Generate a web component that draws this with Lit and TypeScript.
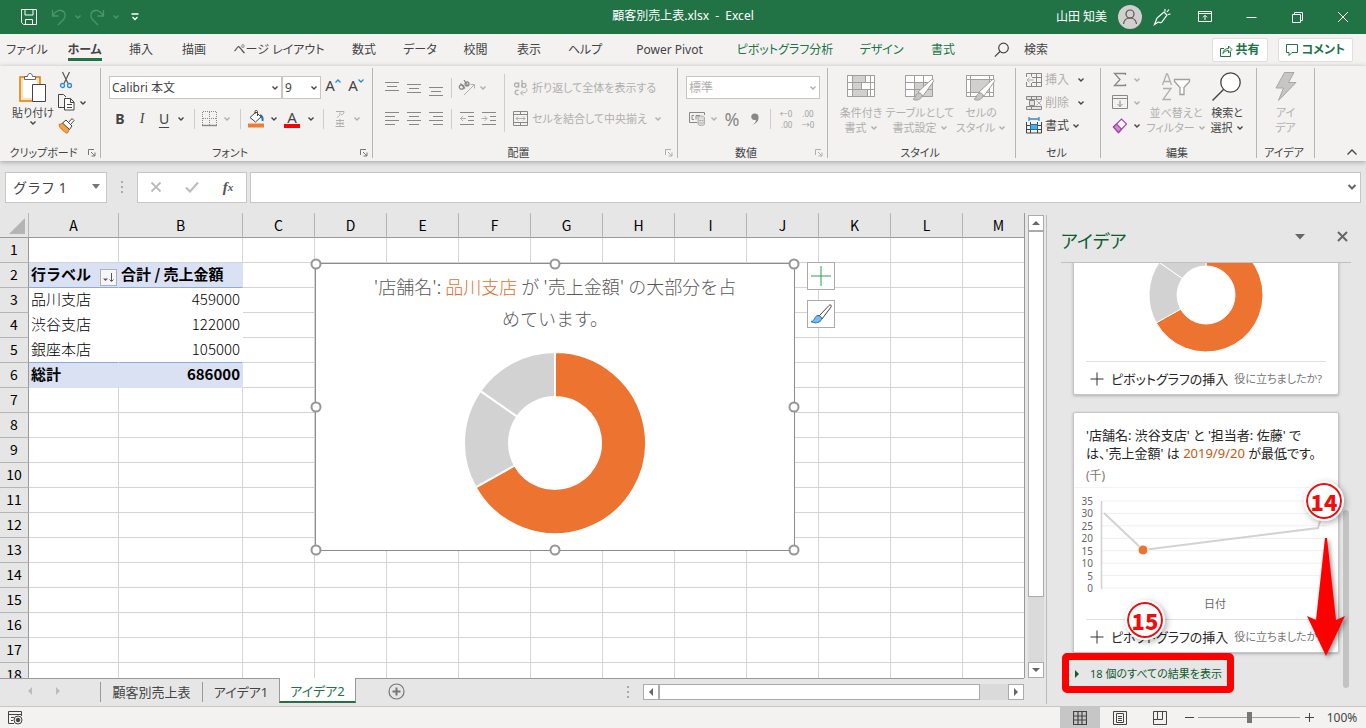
import { LitElement, html, svg, css, nothing } from "lit";
import { customElement } from "lit/decorators.js";
import { classMap } from "lit/directives/class-map.js";

const icon = (w: number, h: number, body: unknown) =>
  html`<svg width=${w} height=${h} viewBox="0 0 ${w} ${h}" fill="none" stroke="currentColor" aria-hidden="true">${body}</svg>`;

const chevron = () => icon(8, 6, svg`<path d="M1.5 1.5 4 4 6.5 1.5" stroke-width="1.4"/>`);

/* ---------- title bar ---------- */
const saveIcon = icon(16, 16, svg`<path d="M.5.5h15v15h-13l-2-2zM4 .5v5.500h8V.5M4.500 15.500v-5h7v5"/>`);
const undoIcon = icon(16, 18, svg`<path d="M1.500 2v6h6M1.500 8C4 4 7 2 10 2.500c5 1 5 6 2.500 9L7 17" stroke-width="1.300"/>`);
const redoIcon = icon(16, 18, svg`<path d="M14.500 2v6h-6M14.500 8C12 4 9 2 6 2.500c-5 1-5 6-2.500 9L9 17" stroke-width="1.300"/>`);
const customizeIcon = icon(8, 8, svg`<path d="M.5 1h7M1.500 4 4 6.500 6.500 4" stroke-width="1.300"/>`);
const avatar = icon(24, 24, svg`<circle cx="12" cy="12" r="12" fill="#d2d0ce" stroke="none"/><circle cx="12" cy="9" r="4" stroke="#555" stroke-width="1.200"/><path d="M5.500 19c.5-4 3-6 6.500-6s6 2 6.500 6" stroke="#555" stroke-width="1.200"/>`);
const penIcon = icon(18, 18, svg`<path d="M1.500 16.500 4 10 11 4l3 3-5.500 7.500C6.500 15 5.500 13.500 4.500 14.500zM12 3.500V1M14 4l2-2.500M15 6.500l2.500-.5" stroke-width="1.200"/>`);
const ribbonModeIcon = icon(14, 12, svg`<path d="M.5.5h13v10H.5zM.5 2.500h13M7 9V4.500M5 6.300l2-2 2 2"/>`);
const minIcon = icon(11, 11, svg`<path d="M.5 5.500h10"/>`);
const restoreIcon = icon(11, 11, svg`<path d="M.5 2.500h8v8h-8zM2.500 2.500v-2h8v8h-2"/>`);
const closeIcon = icon(12, 12, svg`<path d="M1 1l10 10M11 1 1 11"/>`);

/* ---------- ribbon ---------- */
const pasteIcon = icon(28, 32, svg`<rect x="1" y="5" width="20" height="24" fill="#fbe2b4" stroke="#e08214" stroke-width="1.600"/><rect x="4" y="8" width="14" height="18" fill="#fff" stroke="none"/><path d="M5.500 7.500v-3h3c0-4 5-4 5 0h3v3z" fill="#fff" stroke="#666"/><path d="M13.500 12.500h13v17h-13z" fill="#fff" stroke="#444"/>`);
const cutIcon = icon(16, 18, svg`<path d="M4.500 1 10 12.500M11.500 1 6 12.500" stroke="#555" stroke-width="1.200"/><circle cx="4.500" cy="14.500" r="2" stroke="#2e8bd0" stroke-width="1.300"/><circle cx="11.500" cy="14.500" r="2" stroke="#2e8bd0" stroke-width="1.300"/>`);
const copyIcon = icon(17, 17, svg`<path d="M6 13.500H.5V.5h5L8 3" stroke="#444"/><path d="M6.500 4.500h6l3.500 3.500v8H6.500zM12.500 4.500v4H16M9 10.500h5M9 13.500h5" fill="#fff" stroke="#444"/>`);
const painterIcon = icon(17, 17, svg`<path d="M1 7.500 5.500 6l6 6-2 4c-2 .5-3-1-3.500-2-1 0-2-1-2-2-1.500 0-2.500-2-3-4.500z" fill="#f0a348" stroke="#d9771b"/><path d="M4.500 6 8 3l6 6-2.500 3.500zM10.500 5.500 14 1.500l2 2-3.500 4" fill="#fff" stroke="#444"/>`);
const launcherIcon = icon(8, 8, svg`<path d="M.5 6V.5H6M3 3l4 4M7 3.500V7H3.500"/>`);
const borderIcon = icon(16, 16, svg`<path d="M.5 1v13M7.500 1v13M14.500 1v13M1 .5h14M1 7.500h14" stroke="#8a8886" stroke-dasharray="1 1"/><path d="M0 14.500h15" stroke="#8a8886" stroke-width="1.400"/>`);
const fillIcon = icon(18, 18, svg`<path d="M3 7.500 9 2l5 5-5.500 5z" fill="#fff" stroke="#444"/><path d="M8 4V1.500c0-1.500 2.500-1.500 2.500 0V6" stroke="#444"/><path d="M13 5c2 1 3 3 2.500 6" stroke="#2473b5" stroke-width="2"/><path d="M1 15.500h16" stroke="#ed7d31" stroke-width="4"/>`);
const furiganaIcon = icon(10, 18, svg`<path d="M1 1.500h8c0 2-1 3-3 3.500M5 2.500c0 3-1 4-3 5M1 10.500h8M2 13.500h6M2 12v3M8 12v3M.5 16.500h9M5 9v7"/>`);
const lines = (rows: number[][]) =>
  icon(16, 18, rows.map(([x1, x2, y]) => svg`<path d="M${x1} ${y}.5H${x2}" stroke="#8a8886"/>`));
const alignTop = lines([[1, 15, 3], [3, 13, 7], [1, 15, 11]]);
const alignMiddle = lines([[1, 15, 5], [3, 13, 9], [1, 15, 13]]);
const alignBottom = lines([[1, 15, 8], [3, 13, 12], [1, 15, 16]]);
const alignLeft = lines([[1, 15, 2], [1, 11, 6], [1, 15, 10], [1, 11, 14]]);
const alignCenter = lines([[1, 15, 2], [3, 13, 6], [1, 15, 10], [3, 13, 14]]);
const alignRight = lines([[1, 15, 2], [5, 15, 6], [1, 15, 10], [5, 15, 14]]);
const outdentIcon = icon(16, 18, svg`<path d="M1 2.500h14M9 6.500h6M9 10.500h6M1 14.500h14" stroke="#8a8886"/><path d="M7 8.500H1.500M4 6 1.500 8.500 4 11"/>`);
const indentIcon = icon(16, 18, svg`<path d="M1 2.500h14M9 6.500h6M9 10.500h6M1 14.500h14" stroke="#8a8886"/><path d="M.5 8.500H6M3.500 6 6 8.500 3.500 11"/>`);
const orientIcon = icon(18, 16, svg`<circle cx="3.500" cy="7" r="2.200" stroke="#8a8886" stroke-width="1.300"/><path d="M2.500 3.500 7 8.500M6 0l4 6" stroke="#8a8886" stroke-width="1.300"/><circle cx="9" cy="4" r="2" stroke="#8a8886" stroke-width="1.300"/><path d="M6 15 16 5M12.500 4.500H16.500V8.500"/>`);
const wrapIcon = icon(16, 18, svg`<circle cx="3.500" cy="6" r="2" stroke-width="1.300"/><path d="M5.700 3.500v5M9 1v7.500" stroke-width="1.300"/><circle cx="11" cy="6.300" r="2" stroke-width="1.300"/><path d="M5.500 11.500c-4-1.500-5 5 0 4" stroke-width="1.300"/><path d="M13.500 9.500c1.500 3-1 4.500-5.500 4.500M10 11.500 7.500 14l2.500 2.500"/>`);
const mergeIcon = icon(16, 16, svg`<path d="M.5.5h14v14H.5zM.5 3.500h14M.5 11.500h14M7.500.5v3M7.500 11.500v3" stroke="#8a8886"/><path d="M3 7.500h9M5 5.500l-2 2 2 2M10 5.500l2 2-2 2"/>`);
const currencyIcon = icon(17, 14, svg`<path d="M8 10.500H.5V.5h15V3M5 3.500H3v4h2M7 7.500v-4h2M11 3.500H9v2" stroke="#8a8886"/><path d="M9 5.500c0-2 6.500-2 6.500 0v6.500c0 2-6.500 2-6.500 0zM9 7.500c1 1.500 5.500 1.500 6.500 0M9 10c1 1.500 5.500 1.500 6.500 0" fill="#dcdad8"/>`);
const commaIcon = icon(10, 14, svg`<path d="M5 1.500a3.300 3.300 0 1 0 1 6.200C6 10 4.500 11.500 2.500 12.500 6.500 12 9 8.500 8.500 4.500 8.300 2.500 6.800 1.500 5 1.500z" fill="#8a8886" stroke="none"/>`);
const condIcon = icon(28, 32, svg`<path d="M.5 3.500h27v21H.5z" fill="#fff"/><path d="M6 4h12v6H6zM6 10h8v7H6zM6 17h14v7H6z" fill="#d2d0ce" stroke="none"/><path d="M.5 3.500h27v21H.5zM.5 10.500h27M.5 17.500h27M5.500 3.500v21M18.500 3.500v7M14.500 10.500v7M20.500 17.500v7M23.500 3.500v21" stroke="#a19f9d"/>`);
const brush = svg`<path d="M13 20 26 8c2-1.500 3.500 0 2 2L18 24z" fill="#fff" stroke="#a19f9d"/><path d="M8 27c3 0 2-6 6-6 3 0 4 3 2 5s-6 3-8 1z" fill="#c8c6c4" stroke="#a19f9d"/>`;
const tableIcon = icon(30, 32, svg`<path d="M.5 3.500h27v21H.5z" fill="#fff"/><path d="M10 11h18v13H10z" fill="#d2d0ce" stroke="none"/><path d="M.5 3.500h27v21H.5zM.5 10.500h27M.5 17.500h27M9.500 3.500v21M18.500 3.500v21" stroke="#a19f9d"/>${brush}`);
const cellStyleIcon = icon(30, 32, svg`<path d="M.5 3.500h27v21H.5z" fill="#fff"/><path d="M5 8h18v13H5z" fill="#d2d0ce" stroke="none"/><path d="M.5 3.500h27v21H.5zM.5 7.500h27M.5 20.500h27M4.500 3.500v21M23.500 3.500v21" stroke="#a19f9d"/>${brush}`);
const insertCells = icon(16, 14, svg`<g stroke="#8a8886"><path d="M4 .5h11.500v13H.5V9M.5 4V.5H4M6 4.500h9.500M6 9.500h9.500M5.500.5v3M5.500 10v3M10.500.5v13"/></g><path d="M8 7H1M3.500 4.500 1 7l2.500 2.500"/>`);
const deleteCells = icon(16, 14, svg`<g stroke="#8a8886"><path d="M.5.5h15v3H.5zM.5 10.500h15v3H.5zM5.500.5v3M10.500.5v3M5.500 10.500v3M3.500 4.500h5v5h-5z" fill="#e6e4e2"/></g><path d="M10.500 4.500l5 5M15.500 4.500l-5 5"/>`);
const formatCells = icon(16, 17, svg`<path d="M3 0v4M13 0v4M3 2h10" stroke="#2e8bd0" stroke-width="1.300"/><path d="M.5 5v11h15V5M.5 8.500h15M.5 12.500h15M4.500 5v11M11.500 5v11" stroke="#444"/><path d="M4.500 7.500h7v5h-7z" fill="#5aa7e0" stroke="#1f6fb5"/>`);
const sumIcon = icon(16, 16, svg`<path d="M13.500 3V1.500h-11L8 7.500l-5.500 6h11V12" stroke="#8a8886" stroke-width="1.300"/>`);
const fillDown = icon(16, 15, svg`<path d="M.5.500h15v13H.5zM.5 3.500h15M8 5.500v6M5.500 9 8 11.500 10.500 9" stroke="#8a8886"/>`);
const eraserIcon = icon(16, 16, svg`<path d="M1.500 9 9.500 1l5 5-8 8.500z" fill="#fff" stroke="#a343ab" stroke-width="1.200"/><path d="M1.500 9 4.500 6l5 5-3 3.500z" fill="#cf8fd4" stroke="#a343ab" stroke-width="1.200"/>`);
const sortIcon = icon(30, 32, svg`<path d="M1.500 13 5.500 2h1l4 11M3 9.500h6M2 16.500h8L2 27.500h8" stroke-width="1.300"/><path d="M13.500 7.500h15v2L23 15.500v7h-4v-7l-5.500-6z" fill="#fff" stroke="#a19f9d" stroke-width="1.300"/>`);
const findIcon = icon(30, 32, svg`<circle cx="18.500" cy="10.500" r="9.700" fill="#fff" stroke-width="1.300"/><path d="M11.500 17.500.500 28.500" stroke-width="1.500"/>`);
const boltIcon = icon(24, 32, svg`<path d="M10.500.5H20l-5.500 10H22L4.500 28.500l5-12.500H2z" fill="#c8c6c4" stroke="#a8a6a4"/>`);
const searchIcon = icon(16, 16, svg`<circle cx="9.500" cy="6" r="4.800" stroke-width="1.200"/><path d="M6 9.500.800 14.700" stroke-width="1.200"/>`);
const shareIcon = icon(13, 13, svg`<path d="M4 4.500H.5v8h10V8M3 9.500c0-3 2-5 5.500-5V2l3.500 3.500L8.500 9V6.500C6 6.500 4 7.500 3 9.500z"/>`);
const commentIcon = icon(13, 12, svg`<path d="M.5.500h11v8H6l-3 3v-3H.500z"/>`);
const growMark = icon(6, 4, svg`<path d="M.5 3.500 3 1l2.500 2.500" stroke="#2e8bd0" stroke-width="1.300"/>`);
const shrinkMark = icon(6, 4, svg`<path d="M.5.500 3 3 5.500.500" stroke="#2e8bd0" stroke-width="1.300"/>`);
const decIcon = (left: boolean) => html`<span class="dec"><span>${left ? "←0" : ".00"}</span><span>${left ? ".00" : "→0"}</span></span>`;

const tri = (dir: string) => {
  const d: Record<string, string> = {
    up: "M0 6 4 2l4 4z", down: "M0 2l4 4 4-4z", left: "M6 0 2 4l4 4z", right: "M2 0l4 4-4 4z",
  };
  return html`<svg width="8" height="8" viewBox="0 0 8 8" fill="currentColor" aria-hidden="true"><path d=${d[dir]}/></svg>`;
};

/* ---------- donut ---------- */
const shares = [
  { value: 459, color: "#ed7331" },
  { value: 122, color: "#d2d2d2" },
  { value: 105, color: "#d2d2d2" },
];
function donut(size: number, inner: number, gap: number) {
  const total = shares.reduce((s, d) => s + d.value, 0);
  const c = size / 2;
  const R = c - 1;
  const at = (r: number, t: number) => `${(c + r * Math.sin(t)).toFixed(2)} ${(c - r * Math.cos(t)).toFixed(2)}`;
  let a = 0;
  const slices = shares.map((d) => {
    const b = a + (d.value / total) * Math.PI * 2;
    const big = b - a > Math.PI ? 1 : 0;
    const p = `M${at(R, a)}A${R} ${R} 0 ${big} 1 ${at(R, b)}L${at(inner, b)}A${inner} ${inner} 0 ${big} 0 ${at(inner, a)}Z`;
    a = b;
    return svg`<path d=${p} fill=${d.color} stroke="#fff" stroke-width=${gap}/>`;
  });
  return html`<svg class="donut" width=${size} height=${size} viewBox="0 0 ${size} ${size}" role="img" aria-label="売上金額">${slices}</svg>`;
}

const tabs = ["ファイル", "ホーム", "挿入", "描画", "ページ レイアウト", "数式", "データ", "校閲", "表示", "ヘルプ", "Power Pivot", "ピボットグラフ分析", "デザイン", "書式"];
const columns = "ABCDEFGHIJKLM".split("");
const cells: Record<string, string> = {
  A2: "行ラベル", B2: "合計 / 売上金額",
  A3: "品川支店", B3: "459000",
  A4: "渋谷支店", B4: "122000",
  A5: "銀座本店", B5: "105000",
  A6: "総計", B6: "686000",
};

@customElement("app-root")
export class AppRoot extends LitElement {
  static styles = css`
    :host { display: flex; flex-direction: column; height: 100vh; overflow: hidden; background: #e6e6e6; color: #444; font: 12px/16px "Noto Sans", "Noto Sans CJK JP", sans-serif; font-feature-settings: "palt"; }
    * { box-sizing: border-box; }
    button, input, select { font: inherit; font-feature-settings: inherit; color: inherit; background: none; border: 0; padding: 0; margin: 0; border-radius: 0; }
    button { display: inline-flex; align-items: center; justify-content: center; white-space: nowrap; }
    svg { display: block; flex: none; }
    a { color: inherit; text-decoration: none; }
    .dim { color: #b1afad; }

    .titlebar { flex: none; display: grid; grid-template-columns: 1fr auto 1fr; align-items: center; height: 34px; background: #217346; color: #fff; }
    .quick { display: flex; align-items: center; padding-left: 18px; }
    .quick button { height: 24px; width: 22px; }
    .quick .arrow { width: 16px; }
    .quick .off { color: #4f9470; }
    .quick .spread { margin-left: 8px; }
    .title { white-space: pre; padding-bottom: 2px; }
    .account { display: flex; justify-content: flex-end; align-items: center; }
    .account button { height: 34px; width: 46px; }
    .user { padding-right: 11px; }
    .account .face { width: 24px; }
    .account .pen { width: 40px; }

    .menu { flex: none; display: flex; align-items: center; height: 32px; padding-right: 13px; background: #f3f2f1; }
    .tabs { display: grid; grid-template-columns: 54px 61px 52px 54px 116px 54px 58px 53px 54px 58px 111px 120px 73px 50px; height: 30px; }
    .tab { position: relative; height: 30px; }
    .tab.on { font-weight: 700; }
    .tab.on::after { content: ""; position: absolute; left: 14px; right: 13px; bottom: 4px; height: 3px; background: #217346; }
    .tab.ctx { color: #217346; }
    .find { display: flex; align-items: center; gap: 14px; margin-left: 26px; }
    .collab { display: flex; gap: 10px; margin-left: auto; }
    .collab button { height: 24px; padding: 0 7px; gap: 3px; background: #fff; border: 1px solid #e1dfdd; border-radius: 2px; color: #217346; font-weight: 700; }

    .ribbon { flex: none; position: relative; z-index: 1; display: flex; height: 95px; padding-top: 2px; background: #f3f2f1; box-shadow: 0 1px 5px #0000004d; font-size: 11px; }
    .group { flex: none; display: flex; flex-direction: column; height: 90px; border-right: 1px solid #b8b6b4; }
    .clip { width: 101px; } .font { width: 272px; } .align { width: 305px; } .num { width: 150px; }
    .style { width: 188px; } .cell { width: 85px; } .edit { width: 156px; } .idea { width: 58px; }
    .body { flex: 1; display: flex; }
    .idea .body { justify-content: center; }
    .label { flex: none; display: flex; align-items: center; height: 10px; padding-right: 3px; }
    .label span { flex: 1; text-align: center; white-space: nowrap; }
    .label button { width: 10px; height: 10px; color: #777; }
    .label .dim { color: #b1afad; }
    .stack { display: flex; flex-direction: column; font-size: 12px; }
    .stack > div { display: flex; align-items: center; height: 23px; }
    .rows { display: flex; flex-direction: column; gap: 8px; padding: 8px 0 0 8px; }
    .rows.flush { padding-left: 0; }
    .rows > div { display: flex; align-items: center; height: 23px; }
    .big { flex-direction: column; justify-content: flex-start; height: 74px; padding-top: 4px; line-height: 15px; }
    .big > svg { margin-bottom: 1px; }
    .big span { display: flex; align-items: center; gap: 3px; }
    .w8 { width: 8px; } .w10 { width: 10px; } .w12 { width: 12px; } .w14 { width: 14px; } .w16 { width: 16px; } .w18 { width: 18px; }
    .w22 { width: 22px; } .w24 { width: 24px; } .w40 { width: 40px; } .w50 { width: 50px; } .w54 { width: 54px; } .w62 { width: 62px; } .w68 { width: 68px; }
    .rows button, .stack button { height: 22px; }
    .bar { flex: none; width: 1px; height: 20px; margin: 0 4px; background: #cfcdcb; }
    .bar.wide { margin: 0 7px; }
    .bar.tall { height: 58px; margin: 6px 8px 0 4px; }
    .combo { display: grid; align-items: center; height: 23px; background: #fff; border: 1px solid #c8c6c4; font-size: 12px; }
    .combo > * { grid-area: 1 / 1; }
    .combo select, .combo input { appearance: none; width: 100%; height: 100%; padding-left: 2px; outline: 0; }
    .combo svg { justify-self: end; margin-right: 2px; pointer-events: none; }
    .face-name { width: 173px; } .face-size { width: 39px; } .format { width: 134px; }
    .b { font-weight: 700; font-size: 14px; } .i { font: italic 14px "Liberation Serif", serif; } .u { text-decoration: underline; text-underline-offset: 3px; font-size: 14px; }
    .fs { font-size: 15px; align-items: flex-start; }
    .fs svg { margin-top: 2px; }
    .color { flex-direction: column; line-height: 14px; font-size: 15px; }
    .color::after { content: ""; width: 16px; height: 4px; background: #f00; }
    .cmd { gap: 3px; justify-content: flex-start; }
    .pct { font-size: 18px; color: #8a8886; }
    .dec { display: flex; flex-direction: column; font-size: 8px; line-height: 11px; color: #a19f9d; }
    .dec span:last-child { align-self: flex-end; }
    .collapse { margin: auto 8px 4px auto; width: 12px; height: 10px; }

    .formula { flex: none; display: flex; align-items: center; height: 52px; padding: 0 5px 0 5px; }
    .box { height: 31px; background: #fff; border: 1px solid #c8c6c4; }
    .name { width: 102px; font-size: 14px; font-feature-settings: normal; }
    .name input { padding-left: 7px; }
    .name svg { margin-right: 5px; color: #777; }
    .dots { width: 30px; display: grid; justify-content: center; gap: 3px; }
    .dots i { width: 2px; height: 2px; background: #aaa; }
    .fx { display: flex; align-items: center; width: 110px; margin-right: 3px; }
    .fx button { flex: 1; height: 28px; color: #bbb; }
    .fx .fn { color: #555; font: italic 700 15px "Liberation Serif", serif; }
    .fx sub { font-size: 11px; }
    .entry { flex: 1; }
    .entry input { padding-left: 6px; }
    .entry svg { margin-right: 3px; color: #666; }

    .main { flex: 1; min-height: 0; display: flex; }
    .book { flex: 1; min-width: 0; display: flex; flex-direction: column; }
    .view { flex: 1; min-height: 0; display: flex; }
    .sheet { flex: 1; min-width: 0; position: relative; overflow: hidden; border-right: 1px solid #999; background: #fff; font-family: "Noto Sans CJK JP", sans-serif; color: #000; font-size: 14px; font-feature-settings: normal; }
    table { table-layout: fixed; width: 1035px; border-collapse: separate; border-spacing: 0; }
    .crow { width: 29px; } .ca { width: 90px; } .cb { width: 124px; } .cn { width: 72px; }
    th { height: 25px; padding: 0; font-weight: 400; background: #e6e6e6; border-right: 1px solid #b5b5b5; border-bottom: 1px solid #999; line-height: 20px; }
    tbody th { border-right-color: #999; border-bottom-color: #b5b5b5; padding-bottom: 2px; }
    .corner svg { margin: 2px 3px 0 auto; }
    td { height: 25px; padding: 0 2px 2px; border-right: 1px solid #d4d4d4; border-bottom: 1px solid #d4d4d4; font-size: 15px; font-weight: 300; line-height: 20px; white-space: nowrap; overflow: hidden; }
    .p { border-color: #fff; }
    .p.value { text-align: right; }
    .p.hd { background: #d9e1f2; border-color: #d9e1f2; border-bottom-color: #8ea9db; font-weight: 700; }
    .p.ft { background: #d9e1f2; border-color: #d9e1f2; font-weight: 700; }
    .p.pre { border-bottom-color: #8ea9db; }
    .lab { display: flex; justify-content: space-between; align-items: center; height: 22px; }
    .sort { width: 17px; height: 17px; margin: 7px -1px 0 0; border: 1px solid #b0b0b0; background: #f5f6f8; color: #555; }

    .chart { position: absolute; left: 315px; top: 50px; width: 480px; height: 288px; margin: 0; background: #fff; border: 1px solid #8c8c8c; display: flex; flex-direction: column; align-items: center; padding-top: 6px; }
    .chart h2 { margin: 0; width: 380px; font-weight: 300; font-size: 18px; line-height: 32px; color: #595959; text-align: center; }
    .chart .donut { margin-top: 17px; }
    .hl { color: #e0702e; }
    .card .hl { color: #c55a11; }
    .knob { position: absolute; width: 11px; height: 11px; border: 2px solid #969696; border-radius: 50%; background: #fff; transform: translate(-50%, -50%); }
    .t { top: 0; } .m { top: 50%; } .bt { top: 100%; } .l { left: 0; } .c { left: 50%; } .r { left: 100%; }
    .side { position: absolute; left: 807px; top: 49px; display: grid; gap: 10px; }
    .side button { width: 28px; height: 28px; background: #fff; border: 1px solid #ababab; }

    .vscroll { flex: none; width: 16px; margin: 2px 2px 0 3px; display: flex; flex-direction: column; background: #dadada; }
    .hscroll { width: 381px; height: 16px; display: flex; background: #dadada; }
    .knobbtn { flex: none; width: 16px; height: 16px; background: #fff; border: 1px solid #ababab; color: #666; }
    .vthumb { flex: 0 0 79%; background: #fff; border: 1px solid #ababab; }
    .vspace, .hspace { flex: 1; }
    .hthumb { flex: 0 0 321px; background: #fff; border: 1px solid #ababab; }

    .sheettabs { flex: none; display: flex; align-items: flex-start; height: 28px; font-size: 13px; }
    .strip { flex: 1; display: flex; border-top: 1px solid #999; height: 27px; }
    .nav { display: flex; width: 100px; padding-left: 16px; color: #bbb; }
    .nav button { width: 28px; height: 24px; }
    .st { height: 20px; margin-top: 3px; border-left: 1px solid #999; }
    .st.s1 { width: 102px; } .st.s2 { width: 77px; }
    .st.act { width: 77px; height: 25px; margin-top: -1px; padding-top: 2px; background: #fff; border: solid #999; border-width: 0 1px; border-bottom: 2px solid #217346; color: #217346; }
    .add { margin: 4px 0 0 32px; height: 17px; color: #777; }
    .hs { margin-left: auto; display: flex; align-items: center; padding-bottom: 1px; }

    .pane { flex: none; position: relative; width: 320px; display: flex; flex-direction: column; border-left: 1px solid #bbb; margin: 2px 0; padding-left: 14px; }
    .phead { flex: none; display: flex; align-items: center; height: 48px; margin-right: 15px; border-bottom: 1px solid #c0c0c0; color: #666; }
    .phead h1 { flex: 1; margin: 0; padding-top: 4px; font-weight: 400; font-size: 18px; line-height: 24px; color: #0e5c2f; }
    .phead button { width: 24px; height: 24px; margin-bottom: 4px; }
    .phead .close { margin: 0 -3px 4px 18px; }
    .cards { flex: 1; min-height: 0; overflow: hidden; display: flex; flex-direction: column; justify-content: flex-end; padding: 0 28px 22px 12px; }
    .card { flex: none; width: 266px; background: #fff; border: 1px solid #c6c6c6; border-radius: 2px; box-shadow: 0 1px 3px #00000040; margin-bottom: 17px; display: flex; flex-direction: column; color: #262626; }
    .card.last { margin-bottom: 13px; }
    .card .donut { align-self: center; margin-bottom: 8px; }
    .card p { margin: 0; padding: 13px 12px 0; font-size: 13px; line-height: 18px; white-space: nowrap; }
    .unit { padding: 6px 12px 3px; color: #777; line-height: 16px; }
    .axis { font-size: 10px; fill: #666; stroke: none; }
    .axis.name-axis { font-size: 11px; }
    .cfoot { display: flex; justify-content: space-between; align-items: center; height: 33px; margin: 0 12px; border-top: 1px solid #e1dfdd; padding: 1px 4px 0 4px; white-space: nowrap; }
    .cfoot button { gap: 7px; font-size: 13px; }
    .cfoot a { color: #777; font-size: 11px; }
    .more { align-self: flex-start; gap: 9px; height: 24px; font-size: 11px; color: #0e5c2f; }
    .pscroll { position: absolute; right: 17px; top: 295px; width: 6px; height: 178px; border-radius: 3px; background: #c3c3c3; }
    .frame { position: absolute; left: 15px; top: 438px; width: 172px; height: 40px; border: 7px solid #f00; border-radius: 5px; }
    .mark { position: absolute; width: 36px; height: 36px; border: 2px solid #f20d0d; border-radius: 50%; outline: 2px solid #fff; background: #fff; color: #f20d0d; display: grid; place-items: center; font-weight: 900; font-size: 22px; font-family: "Noto Sans CJK JP", sans-serif; box-shadow: 2px 2px 6px 2px #0000004d; }
    .n14 { left: 259px; top: 268px; } .n15 { left: 80px; top: 387px; }
    .down { position: absolute; left: 260px; top: 322px; filter: drop-shadow(2px 2px 2px #0006); }

    .status { flex: none; display: flex; align-items: center; height: 22px; padding: 0 7px; background: #f3f2f1; border-top: 1px solid #c6c6c6; }
    .views { display: flex; margin-left: auto; height: 21px; }
    .views button { width: 40px; height: 21px; }
    .views .sel { background: #c6c6c6; }
    .status .step { width: 18px; height: 20px; }
    .zoom { appearance: none; width: 102px; height: 12px; background: linear-gradient(#a0a0a0, #a0a0a0) center / 100% 1px no-repeat; }
    .zoom::-webkit-slider-thumb { appearance: none; width: 5px; height: 11px; background: #777; }
    .pc { padding-left: 7px; width: 41px; }
  `;

  private label(text: string, launcher = "") {
    return html`<div class="label"><span>${text}</span>${launcher
      ? html`<button class=${launcher === "off" ? "dim" : ""} aria-label="${text}の設定">${launcherIcon}</button>`
      : nothing}</div>`;
  }

  private tool(name: string, cls: string, content: unknown) {
    return html`<button class=${cls} aria-label=${name}>${content}</button>`;
  }

  private ribbon() {
    const t = this.tool;
    return html`<div class="ribbon">
      <section class="group clip"><div class="body"><i class="w8"></i>
        <button class="big w50">${pasteIcon}<span>貼り付け</span><span>${chevron()}</span></button>
        <div class="stack">
          <div>${t("切り取り", "w16", cutIcon)}</div>
          <div>${t("コピー", "w16", copyIcon)}${t("コピーのオプション", "w18", chevron())}</div>
          <div>${t("書式のコピー", "w16", painterIcon)}</div>
        </div></div>${this.label("クリップボード", "on")}</section>

      <section class="group font"><div class="body"><div class="rows">
        <div>
          <div class="combo face-name"><select aria-label="フォント名"><option>Calibri 本文</option></select>${chevron()}</div>
          <div class="combo face-size"><select aria-label="フォント サイズ"><option>9</option></select>${chevron()}</div>
          <button class="fs w24" aria-label="拡大">A${growMark}</button><button class="fs w22" aria-label="縮小">A${shrinkMark}</button>
        </div>
        <div>
          <button class="b w22">B</button><button class="i w22">I</button><button class="u w22">U</button>${t("下線の種類", "w12", chevron())}
          <i class="bar wide"></i>${t("罫線", "w16 dim", borderIcon)}${t("罫線の種類", "w18 dim", chevron())}
          <i class="bar"></i>${t("塗りつぶし", "w22", fillIcon)}${t("塗りつぶしの色", "w14", chevron())}
          <button class="color w22">A</button>${t("フォントの色", "w16", chevron())}
          <i class="bar"></i>${t("ふりがな", "w24 dim", furiganaIcon)}${t("ふりがなの設定", "w10 dim", chevron())}
        </div></div></div>${this.label("フォント", "on")}</section>

      <section class="group align"><div class="body dim"><div class="rows">
        <div>${t("上揃え", "w22", alignTop)}${t("上下中央", "w22", alignMiddle)}${t("下揃え", "w22", alignBottom)}
          <i class="bar"></i>${t("方向", "w22", orientIcon)}${t("方向の設定", "w10", chevron())}</div>
        <div>${t("左揃え", "w22", alignLeft)}${t("中央揃え", "w22", alignCenter)}${t("右揃え", "w22", alignRight)}
          <i class="bar"></i>${t("インデントを減らす", "w22", outdentIcon)}${t("インデントを増やす", "w22", indentIcon)}</div>
        </div><i class="bar tall"></i>
        <div class="rows flush">
        <div><button class="cmd">${wrapIcon}折り返して全体を表示する</button></div>
        <div><button class="cmd">${mergeIcon}セルを結合して中央揃え</button>${t("結合の設定", "w22", chevron())}</div>
        </div></div>${this.label("配置", "off")}</section>

      <section class="group num"><div class="body dim"><div class="rows">
        <div><div class="combo format"><select aria-label="表示形式"><option>標準</option></select>${chevron()}</div></div>
        <div>${t("通貨", "w22", currencyIcon)}${t("通貨の設定", "w12", chevron())}<button class="pct w24">%</button>${t("桁区切り", "w22", commaIcon)}
          <i class="bar"></i><button class="w22">${decIcon(true)}</button><button class="w22">${decIcon(false)}</button></div>
        </div></div>${this.label("数値", "off")}</section>

      <section class="group style"><div class="body dim"><i class="w8"></i>
        <button class="big w50">${condIcon}<span>条件付き</span><span>書式 ${chevron()}</span></button>
        <button class="big w68">${tableIcon}<span>テーブルとして</span><span>書式設定 ${chevron()}</span></button>
        <button class="big w54">${cellStyleIcon}<span>セルの</span><span>スタイル ${chevron()}</span></button>
        </div>${this.label("スタイル")}</section>

      <section class="group cell"><div class="body"><i class="w10"></i><div class="stack">
        <div><button class="cmd dim">${insertCells}挿入</button>${t("挿入の種類", "w24", chevron())}</div>
        <div><button class="cmd dim">${deleteCells}削除</button>${t("削除の種類", "w24", chevron())}</div>
        <div><button class="cmd">${formatCells}書式 ${chevron()}</button></div>
        </div></div>${this.label("セル")}</section>

      <section class="group edit"><div class="body"><i class="w10"></i><div class="stack">
        <div>${t("合計", "w18 dim", sumIcon)}${t("合計の種類", "w16 dim", chevron())}</div>
        <div>${t("フィル", "w18 dim", fillDown)}${t("フィルの種類", "w16 dim", chevron())}</div>
        <div>${t("クリア", "w18", eraserIcon)}${t("クリアの種類", "w16", chevron())}</div></div>
        <button class="big w62 dim">${sortIcon}<span>並べ替えと</span><span>フィルター ${chevron()}</span></button>
        <button class="big w40">${findIcon}<span>検索と</span><span>選択 ${chevron()}</span></button>
        </div>${this.label("編集")}</section>

      <section class="group idea"><div class="body dim">
        <button class="big">${boltIcon}<span>アイ</span><span>デア</span></button>
        </div>${this.label("アイデア")}</section>
      <button class="collapse" aria-label="リボンを折りたたむ">${icon(10, 6, svg`<path d="M.5 5.500 5 1l4.500 4.500" stroke-width="1.300"/>`)}</button>
    </div>`;
  }

  private cell(col: string, row: number) {
    const pivot = (col === "A" || col === "B") && row >= 2 && row <= 6;
    const cls = classMap({
      p: pivot,
      hd: pivot && row === 2,
      ft: pivot && row === 6,
      pre: pivot && row === 5,
      value: pivot && col === "B" && row > 2,
    });
    const text = cells[col + row] ?? "";
    return html`<td class=${cls}>${col + row === "A2"
      ? html`<div class="lab">${text}<button class="sort" aria-label="並べ替え">${icon(13, 11, svg`<path d="M1 6.500h5L3.500 9z" fill="currentColor" stroke="none"/><path d="M9.500 1v8M7.500 7.500l2 2 2-2"/>`)}</button></div>`
      : text}</td>`;
  }

  private sheet() {
    return html`<div class="sheet">
      <table>
        <colgroup><col class="crow"><col class="ca"><col class="cb">${columns.slice(2).map(() => html`<col class="cn">`)}</colgroup>
        <thead><tr><th class="corner"><svg width="16" height="16" viewBox="0 0 16 16" aria-hidden="true"><path d="M16 0v16H0z" fill="#b4b4b4"/></svg></th>
          ${columns.map((c) => html`<th scope="col">${c}</th>`)}</tr></thead>
        <tbody>${Array.from({ length: 18 }, (_, i) => i + 1).map((r) => html`<tr><th scope="row">${r}</th>${columns.map((c) => this.cell(c, r))}</tr>`)}</tbody>
      </table>
      <figure class="chart">
        <h2>'店舗名': <span class="hl">品川支店</span> が '売上金額' の大部分を占めています。</h2>
        ${donut(184, 46, 2)}
        ${["t l", "t c", "t r", "m l", "m r", "bt l", "bt c", "bt r"].map((p) => html`<i class="knob ${p}"></i>`)}
      </figure>
      <div class="side">
        <button aria-label="グラフ要素">${icon(22, 22, svg`<path d="M11 1v20M1 11h20" stroke="#2f9e51"/>`)}</button>
        <button aria-label="グラフ スタイル">${icon(24, 24, svg`<path d="M10 14 20 3.500c1.500-1.500 3 0 2 1.500L13 17" stroke="#444" fill="#fff"/><path d="M2 19.500c4 0 3-5.500 7-6 3 0 4.500 3 3 5-2 2.500-7 3-10 1z" fill="#7db9ec" stroke="#1a6dba"/>`)}</button>
      </div>
    </div>`;
  }

  private insertFooter() {
    return html`<div class="cfoot"><button>${icon(14, 14, svg`<path d="M7 .5v13M.5 7h13" stroke="#333"/>`)}ピボットグラフの挿入</button><a href="#">役に立ちましたか?</a></div>`;
  }

  private pane() {
    const ticks = [35, 30, 25, 20, 15, 10, 5, 0];
    const y = (v: number) => 101 - (v / 35) * 87;
    return html`<aside class="pane">
      <div class="phead"><h1>アイデア</h1>
        <button aria-label="オプション">${icon(10, 6, svg`<path d="M0 0h10L5 5.500z" fill="currentColor" stroke="none"/>`)}</button>
        <button class="close" aria-label="閉じる">${icon(11, 11, svg`<path d="M1 1l9 9M10 1l-9 9" stroke-width="2"/>`)}</button></div>
      <div class="cards">
        <article class="card">${donut(116, 29, 1)}${this.insertFooter()}</article>
        <article class="card last">
          <p>'店舗名: 渋谷支店' と '担当者: 佐藤' で<br>は、'売上金額' は <span class="hl">2019/9/20</span> が最低です。</p>
          <div class="unit">(千)</div>
          <svg width="264" height="132" viewBox="0 0 264 132" fill="none" role="img" aria-label="売上金額の推移">
            <path d="M0 .5h264" stroke="#f3f3f3"/>
            ${ticks.map((v) => svg`<path d="M28 ${y(v)}h224" stroke="#efefef"/><text class="axis" x="19" y=${y(v) + 4} text-anchor="end">${v}</text>`)}
            <path d="M27.500 14v88" stroke="#d0d0d0" stroke-width="1.500"/>
            <path d="M30 26 69 63 244 41 252 14" stroke="#d2d2d2" stroke-width="2"/>
            <circle cx="69" cy="63" r="5" fill="#ed7331" stroke="#fff"/>
            <text class="axis name-axis" x="141" y="121" text-anchor="middle">日付</text>
          </svg>
          ${this.insertFooter()}
        </article>
        <button class="more">${tri("right")}18 個のすべての結果を表示</button>
      </div>
      <i class="pscroll"></i>
      <div class="frame"></div>
      <svg class="down" width="38" height="120" viewBox="0 0 38 120" aria-hidden="true"><path d="M18 1h2l9 82 9-4-19 40L0 79l9 4z" fill="#f00"/></svg>
      <span class="mark n14">14</span><span class="mark n15">15</span>
    </aside>`;
  }

  render() {
    const t = this.tool;
    return html`
      <header class="titlebar">
        <div class="quick">
          ${t("上書き保存", "", saveIcon)}${t("元に戻す", "off spread", undoIcon)}${t("元に戻す履歴", "off arrow", chevron())}
          ${t("やり直し", "off", redoIcon)}${t("やり直し履歴", "off arrow", chevron())}${t("カスタマイズ", "", customizeIcon)}
        </div>
        <div class="title">顧客別売上表.xlsx  -  Excel</div>
        <div class="account"><span class="user">山田 知美</span>
          ${t("アカウント", "face", avatar)}${t("手書き", "pen", penIcon)}${t("リボンの表示オプション", "", ribbonModeIcon)}
          ${t("最小化", "", minIcon)}${t("元に戻す(縮小)", "", restoreIcon)}${t("閉じる", "", closeIcon)}</div>
      </header>
      <nav class="menu">
        <div class="tabs">${tabs.map((name, i) => html`<button class=${classMap({ tab: true, on: i === 1, ctx: i > 10 })}>${name}</button>`)}</div>
        <button class="find">${searchIcon}検索</button>
        <div class="collab"><button>${shareIcon}共有</button><button>${commentIcon}コメント</button></div>
      </nav>
      ${this.ribbon()}
      <div class="formula">
        <div class="combo box name"><input aria-label="名前ボックス" value="グラフ 1">${icon(10, 6, svg`<path d="M1 0h8L5 5z" fill="currentColor" stroke="none"/>`)}</div>
        <div class="dots"><i></i><i></i><i></i></div>
        <div class="box fx">
          ${t("キャンセル", "", icon(12, 12, svg`<path d="M1.500 1.500l9 9M10.500 1.500l-9 9" stroke-width="1.800"/>`))}
          ${t("入力", "", icon(14, 12, svg`<path d="M1 6.500 5 10.500 13 1.500" stroke-width="2"/>`))}
          <button class="fn">f<sub>x</sub></button></div>
        <div class="combo box entry"><input aria-label="数式バー">${icon(10, 8, svg`<path d="M1.500 2 5 5.500 8.500 2" stroke-width="2"/>`)}</div>
      </div>
      <main class="main">
        <div class="book">
          <div class="view">${this.sheet()}
            <div class="vscroll"><button class="knobbtn" aria-label="上へ">${tri("up")}</button><i class="vthumb"></i><i class="vspace"></i><button class="knobbtn" aria-label="下へ">${tri("down")}</button></div>
          </div>
          <div class="sheettabs">
            <div class="strip">
              <div class="nav">${t("前のシート", "", tri("left"))}${t("次のシート", "", tri("right"))}</div>
              <button class="st s1">顧客別売上表</button><button class="st s2">アイデア1</button><button class="st act">アイデア2</button>
              ${t("新しいシート", "add", icon(17, 17, svg`<circle cx="8.500" cy="8.500" r="7.500" stroke-width="1.200"/><path d="M8.500 4.500v8M4.500 8.500h8" stroke-width="2"/>`))}
              <div class="hs"><div class="dots"><i></i><i></i><i></i></div>
                <div class="hscroll"><button class="knobbtn" aria-label="左へ">${tri("left")}</button><i class="hthumb"></i><i class="hspace"></i><button class="knobbtn" aria-label="右へ">${tri("right")}</button></div></div>
            </div>
            <i class="w22"></i>
          </div>
        </div>
        ${this.pane()}
      </main>
      <footer class="status">
        ${t("マクロの記録", "", icon(16, 14, svg`<path d="M7 12.500H1.500V.5h13V5M1.500 3.500h13M4 6.500h3M4 9.500h2"/><circle cx="11" cy="9" r="4"/><circle cx="11" cy="9" r="1.800" fill="currentColor"/>`))}
        <div class="views">
          ${t("標準", "sel", icon(14, 14, svg`<path d="M.5.5h13v13H.5zM.5 5h13M.5 9h13M5 .5v13M9 .5v13" stroke-width="1.200"/>`))}
          ${t("ページ レイアウト", "", icon(14, 14, svg`<path d="M.5.5h13v13H.5zM3.500 2.500h7v9h-7zM5 5.500h4M5 7.500h4M5 9.500h4"/>`))}
          ${t("改ページ プレビュー", "", icon(14, 14, svg`<path d="M.5.5h13v13H.5zM4.500.5v8h5v-8M.5 8.500h4"/>`))}
        </div>
        <button class="step" aria-label="縮小">${icon(9, 9, svg`<path d="M0 4.500h9"/>`)}</button>
        <input class="zoom" type="range" min="0" max="100" value="50" aria-label="ズーム">
        <button class="step" aria-label="拡大">${icon(9, 9, svg`<path d="M0 4.500h9M4.500 0v9"/>`)}</button>
        <button class="pc">100%</button>
      </footer>`;
  }
}
